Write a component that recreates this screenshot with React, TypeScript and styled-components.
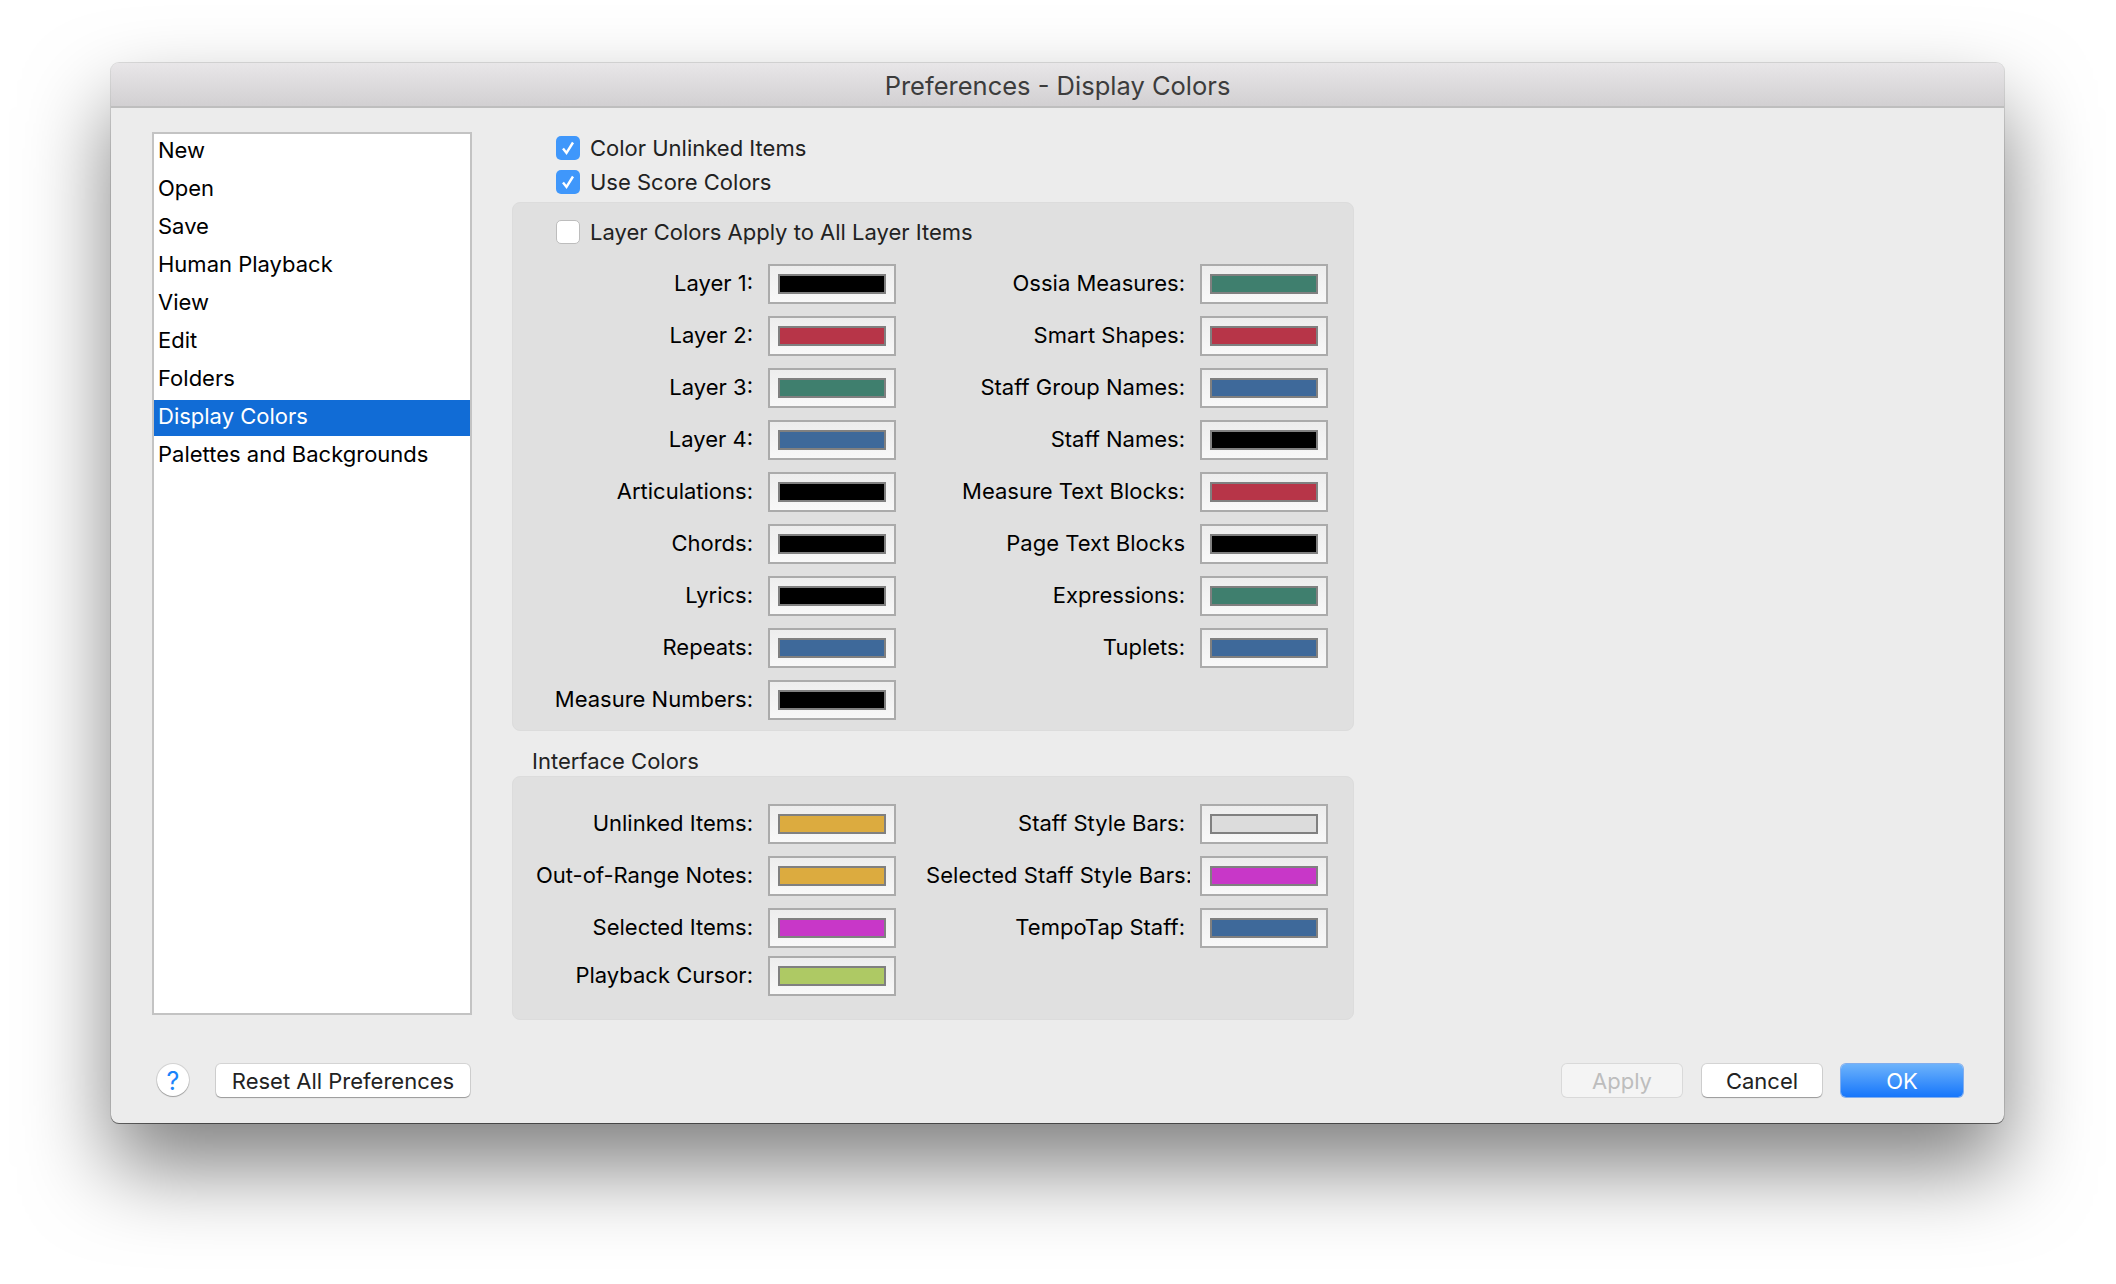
import styled, { createGlobalStyle } from "styled-components";

const GlobalStyle = createGlobalStyle`
  html, body {
    margin: 0;
    background: #fff;
  }
  body {
    font-family: Inter, "Liberation Sans", sans-serif;
    -webkit-font-smoothing: antialiased;
  }
`;

const Page = styled.div`
  width: 2116px;
  height: 1284px;
  padding: 63px 0 0 111px;
  box-sizing: border-box;
  overflow: hidden;
`;

const Window = styled.div`
  width: 1893px;
  height: 1060px;
  display: flex;
  flex-direction: column;
  background: #ececec;
  border-radius: 8px;
  box-shadow: 0 0 0 1px rgba(0, 0, 0, 0.12), 0 1px 0 rgba(0, 0, 0, 0.45),
    0 44px 85px rgba(0, 0, 0, 0.5);
`;

const TitleBar = styled.div`
  height: 45px;
  flex: none;
  box-sizing: border-box;
  padding-top: 2px;
  display: flex;
  align-items: center;
  justify-content: center;
  background: linear-gradient(#e8e6e8, #d2d0d2);
  border-bottom: 2px solid #bebebe;
  border-radius: 8px 8px 0 0;
  color: #3c3c3c;
  font-size: 25.5px;
`;

const Body = styled.div`
  flex: 1;
  display: flex;
  flex-direction: column;
  padding: 24px 41px 26px;
`;

const Main = styled.div`
  height: 883px;
  display: flex;
  gap: 40px;
`;

const List = styled.div`
  width: 320px;
  flex: none;
  box-sizing: border-box;
  border: 2px solid #c3c3c3;
  background: #fff;
  display: flex;
  flex-direction: column;
  gap: 2px;
`;

const ListItem = styled.div<{ $selected?: boolean }>`
  height: 36px;
  box-sizing: border-box;
  padding: 0 0 5px 4px;
  display: flex;
  align-items: center;
  font-size: 22px;
  color: ${(props) => (props.$selected ? "#fff" : "#000")};
  background: ${(props) => (props.$selected ? "#116cd6" : "transparent")};
`;

const Content = styled.div`
  width: 842px;
  flex: none;
`;

const TopChecks = styled.div`
  padding: 4px 0 8px 44px;
  display: flex;
  flex-direction: column;
  gap: 10px;
`;

const CheckRow = styled.div`
  height: 24px;
  display: flex;
  align-items: center;
  gap: 10px;
  font-size: 22px;
  color: #222;
`;

const CheckBox = styled.span<{ $checked?: boolean }>`
  width: 24px;
  height: 24px;
  flex: none;
  box-sizing: border-box;
  border-radius: 5px;
  display: flex;
  align-items: center;
  justify-content: center;
  background: ${(props) => (props.$checked ? "#3f97fb" : "#fff")};
  border: ${(props) => (props.$checked ? "none" : "1px solid #bdbdbd")};
`;

const Panel = styled.div`
  box-sizing: border-box;
  border: 1px solid #dcdcdc;
  border-radius: 8px;
  background: #e0e0e0;
  padding-left: 19px;
`;

const LayerPanel = styled(Panel)`
  height: 529px;
  padding-top: 17px;
`;

const InterfacePanel = styled(Panel)`
  height: 244px;
  padding-top: 27px;
`;

const LayerCheck = styled(CheckRow)`
  margin: 0 0 20px 24px;
`;

const SectionTitle = styled.div`
  height: 45px;
  box-sizing: border-box;
  padding: 18px 0 0 20px;
  font-size: 22px;
  line-height: 24px;
  color: #222;
`;

const Columns = styled.div`
  display: flex;
  gap: 30px;
`;

const Column = styled.div`
  display: flex;
  flex-direction: column;
`;

const ColorRow = styled.div<{ $tight?: boolean }>`
  height: ${(props) => (props.$tight ? 48 : 52)}px;
  display: flex;
  align-items: flex-start;
`;

const Label = styled.div<{ $width: number; $clipped?: boolean }>`
  width: ${(props) => (props.$clipped ? props.$width - 10 : props.$width)}px;
  margin-right: ${(props) => (props.$clipped ? 10 : 0)}px;
  height: 40px;
  flex: none;
  box-sizing: border-box;
  display: flex;
  align-items: center;
  justify-content: ${(props) => (props.$clipped ? "flex-start" : "flex-end")};
  padding-right: ${(props) => (props.$clipped ? 0 : 15)}px;
  padding-bottom: 3px;
  letter-spacing: ${(props) => (props.$clipped ? "0.08px" : "normal")};
  overflow: hidden;
  white-space: nowrap;
  font-size: 22px;
  color: #000;
`;

const Swatch = styled.div`
  width: 128px;
  height: 40px;
  flex: none;
  box-sizing: border-box;
  border: 2px solid #ababab;
  background: linear-gradient(#ededed, #f8f8f8);
  display: flex;
  align-items: center;
  justify-content: center;
`;

const SwatchColor = styled.div<{ $color: string }>`
  width: 108px;
  height: 20px;
  box-sizing: border-box;
  border: 2px solid #808080;
  background: ${(props) => props.$color};
`;

const Footer = styled.div`
  margin-top: 48px;
  height: 34px;
  display: flex;
  align-items: center;
`;

const HelpButton = styled.div`
  width: 32px;
  height: 32px;
  padding-top: 1px;
  margin: 0 27px 0 5px;
  box-sizing: border-box;
  border-radius: 50%;
  background: #fff;
  box-shadow: 0 0 0 1px rgba(0, 0, 0, 0.1), 0 1px 1px rgba(0, 0, 0, 0.25);
  display: flex;
  align-items: center;
  justify-content: center;
  color: #1b84fb;
  font-size: 25px;
`;

const Button = styled.div<{ $width: number; $disabled?: boolean }>`
  width: ${(props) => props.$width}px;
  height: 33px;
  padding-top: 1px;
  box-sizing: border-box;
  border-radius: 5px;
  display: flex;
  align-items: center;
  justify-content: center;
  font-size: 22px;
  background: ${(props) => (props.$disabled ? "#f4f4f4" : "#fff")};
  color: ${(props) => (props.$disabled ? "#bdbdbd" : "#222")};
  box-shadow: ${(props) =>
    props.$disabled
      ? "0 0 0 1px rgba(0, 0, 0, 0.08)"
      : "0 0 0 1px rgba(0, 0, 0, 0.1), 0 1px 1px rgba(0, 0, 0, 0.28)"};
`;

const PrimaryButton = styled(Button)`
  background: linear-gradient(#6db3fb, #1676fb);
  color: #fff;
  box-shadow: 0 0 0 1px rgba(20, 110, 240, 0.5);
`;

const Spacer = styled.div`
  flex: 1;
`;

const ActionGroup = styled.div`
  display: flex;
  gap: 19px;
`;

const ApplyButton = styled(Button)`
  margin-right: 1px;
`;

const red = "#b73548";
const teal = "#3f7f6e";
const blue = "#3e699a";
const black = "#000000";
const gold = "#dcab3f";
const magenta = "#c837c8";
const green = "#aec964";
const gray = "#dcdcdc";

const pages = [
  "New",
  "Open",
  "Save",
  "Human Playback",
  "View",
  "Edit",
  "Folders",
  "Display Colors",
  "Palettes and Backgrounds",
];

const layerLeft = [
  ["Layer 1:", black],
  ["Layer 2:", red],
  ["Layer 3:", teal],
  ["Layer 4:", blue],
  ["Articulations:", black],
  ["Chords:", black],
  ["Lyrics:", black],
  ["Repeats:", blue],
  ["Measure Numbers:", black],
];

const layerRight = [
  ["Ossia Measures:", teal],
  ["Smart Shapes:", red],
  ["Staff Group Names:", blue],
  ["Staff Names:", black],
  ["Measure Text Blocks:", red],
  ["Page Text Blocks", black],
  ["Expressions:", teal],
  ["Tuplets:", blue],
];

const interfaceLeft = [
  ["Unlinked Items:", gold],
  ["Out-of-Range Notes:", gold],
  ["Selected Items:", magenta],
  ["Playback Cursor:", green],
];

const interfaceRight = [
  ["Staff Style Bars:", gray],
  ["Selected Staff Style Bars:", magenta],
  ["TempoTap Staff:", blue],
];

const Check = () => (
  <svg width="16" height="16" viewBox="0 0 16 16" fill="none">
    <path d="M3 8.5 L6.5 13 L13 2.5" stroke="#fff" strokeWidth="2.4" />
  </svg>
);

const colorRows = (rows: string[][], width: number, tightFrom = 99) =>
  rows.map(([name, color], i) => (
    <ColorRow key={name} $tight={i + 1 === tightFrom}>
      <Label $width={width} $clipped={name === "Selected Staff Style Bars:"}>
        {name}
      </Label>
      <Swatch>
        <SwatchColor $color={color} />
      </Swatch>
    </ColorRow>
  ));

const App = () => {
  return (
    <Page>
      <GlobalStyle />
      <Window>
        <TitleBar>Preferences - Display Colors</TitleBar>
        <Body>
          <Main>
            <List>
              {pages.map((name) => (
                <ListItem key={name} $selected={name === "Display Colors"}>
                  {name}
                </ListItem>
              ))}
            </List>
            <Content>
              <TopChecks>
                <CheckRow>
                  <CheckBox $checked>
                    <Check />
                  </CheckBox>
                  Color Unlinked Items
                </CheckRow>
                <CheckRow>
                  <CheckBox $checked>
                    <Check />
                  </CheckBox>
                  Use Score Colors
                </CheckRow>
              </TopChecks>
              <LayerPanel>
                <LayerCheck>
                  <CheckBox />
                  Layer Colors Apply to All Layer Items
                </LayerCheck>
                <Columns>
                  <Column>{colorRows(layerLeft, 236)}</Column>
                  <Column>{colorRows(layerRight, 274)}</Column>
                </Columns>
              </LayerPanel>
              <SectionTitle>Interface Colors</SectionTitle>
              <InterfacePanel>
                <Columns>
                  <Column>{colorRows(interfaceLeft, 236, 3)}</Column>
                  <Column>{colorRows(interfaceRight, 274)}</Column>
                </Columns>
              </InterfacePanel>
            </Content>
          </Main>
          <Footer>
            <HelpButton>?</HelpButton>
            <Button $width={254}>Reset All Preferences</Button>
            <Spacer />
            <ActionGroup>
              <ApplyButton $width={120} $disabled>
                Apply
              </ApplyButton>
              <Button $width={120}>Cancel</Button>
              <PrimaryButton $width={122}>OK</PrimaryButton>
            </ActionGroup>
          </Footer>
        </Body>
      </Window>
    </Page>
  );
};

export default App;
